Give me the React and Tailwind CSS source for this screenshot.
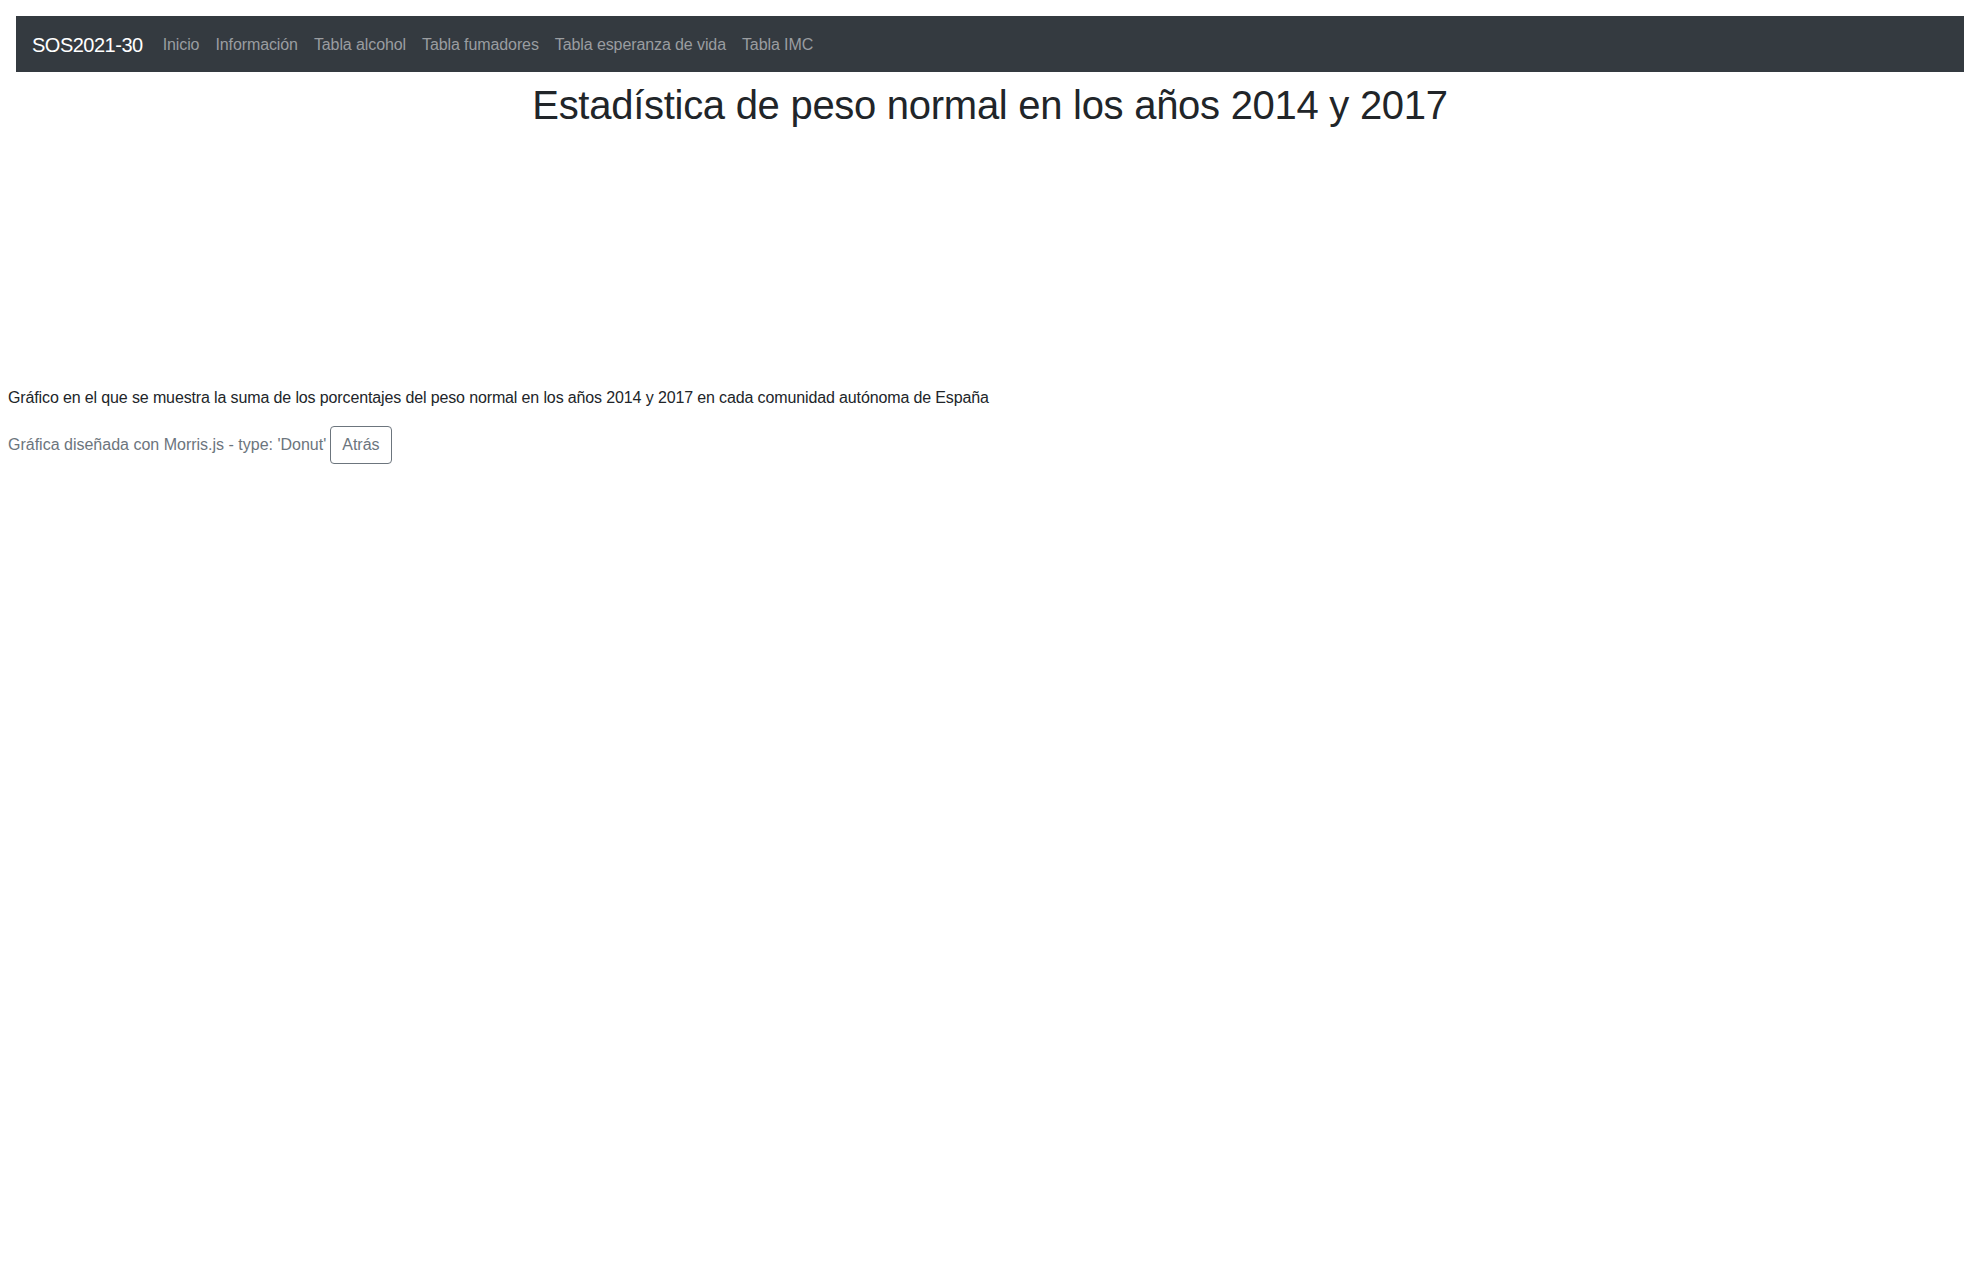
import React from 'react';

const links = ['Inicio', 'Información', 'Tabla alcohol', 'Tabla fumadores', 'Tabla esperanza de vida', 'Tabla IMC'];

export default function App() {
  return (
    <div className="min-h-screen bg-white p-2 text-[#212529]" style={{ fontFamily: '"Liberation Sans", Arial, sans-serif' }}>
      {/* navbar */}
      <nav className="m-2 flex h-14 items-center bg-[#343a40] px-4 pt-[2px]">
        <a className="mr-3 py-[5px] text-[20px] leading-[30px] tracking-[-0.5px] text-white">SOS2021-30</a>
        <ul className="flex">
          {links.map(l => (
            <li key={l}>
              <a className="block px-2 py-2 text-base leading-6 tracking-[-0.1px] text-[#9a9da0]">{l}</a>
            </li>
          ))}
        </ul>
      </nav>

      <h1 className="mt-[9px] text-center text-[40px] font-medium leading-[1.2] tracking-[-0.28px]">
        Estadística de peso normal en los años 2014 y 2017
      </h1>

      {/* chart container (morris donut, nothing drawn) */}
      <div className="mb-2 h-[249px]"></div>

      <p className="mb-4 text-base leading-6 tracking-[-0.13px]">
        Gráfico en el que se muestra la suma de los porcentajes del peso normal en los años 2014 y 2017 en cada comunidad autónoma de España
      </p>

      <div className="flex items-center">
        <span className="text-base leading-6 text-[#6c757d]">Gráfica diseñada con Morris.js - type: 'Donut'</span>
        <button className="ml-1 rounded border border-[#6c757d] px-[11px] py-1.5 text-base leading-6 text-[#6c757d]">Atrás</button>
      </div>
    </div>
  );
}
